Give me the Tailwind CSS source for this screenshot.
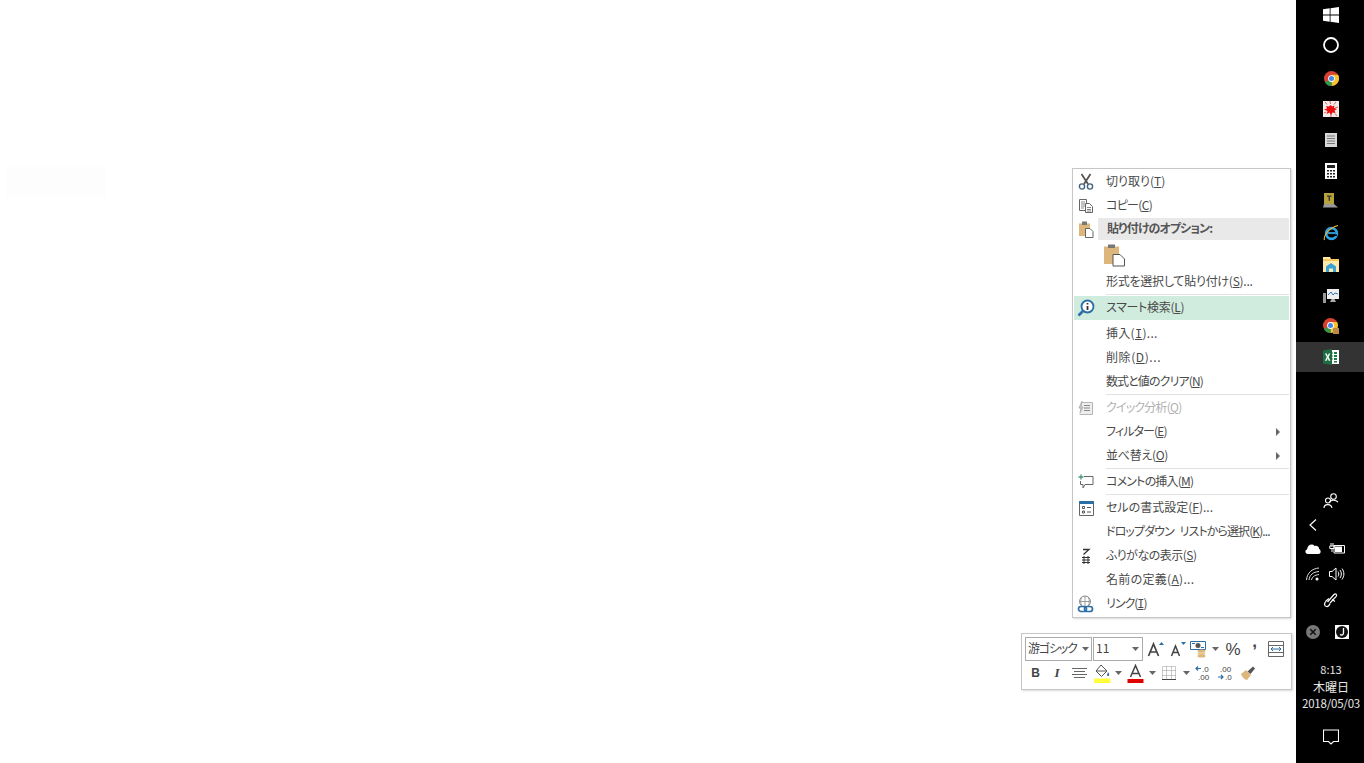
<!DOCTYPE html>
<html lang="ja">
<head>
  <meta charset="UTF-8" />
  <title>Excel context menu</title>
  <script src="https://cdn.jsdelivr.net/npm/@tailwindcss/browser@4"></script>
</head>
<body class="bg-white">
  <div class="flex w-[1364px] h-[763px] overflow-hidden font-['Noto_Sans_CJK_JP',sans-serif]">

    <!-- Sheet area -->
    <main class="relative flex-1 bg-white">
      <div class="ml-[6px] pt-[167px]"><div class="w-[100px] h-[30px] bg-[#fdfdfd]"></div></div>

      <!-- Context menu -->
      <div class="absolute left-[1072px] top-[168px] w-[219px] h-[450px] bg-white border border-[#c6c6c6] p-px shadow-[1px_1px_2px_rgba(0,0,0,0.15)] text-[12px] text-[#4a4a4a] [font-feature-settings:'palt']">
        <div class="flex items-center h-6">
          <span class="w-6 mr-2 flex justify-center">
            <svg width="16" height="18" viewBox="0 0 16 18" fill="none"><path d="M3.500 1l6.500 10M12.500 1L6 11" stroke="#555" stroke-width="1.800"/><circle cx="4" cy="13.500" r="2.600" stroke="#44627f" stroke-width="1.400"/><circle cx="12" cy="13.500" r="2.600" stroke="#44627f" stroke-width="1.400"/></svg>
          </span>
          <span class="-mt-0.5">切り取り(<u>T</u>)</span>
        </div>
        <div class="flex items-center h-6">
          <span class="w-6 mr-2 flex justify-center">
            <svg width="16" height="16" viewBox="0 0 16 16" fill="none" stroke="#666"><path d="M1.500 1.500h7v11h-7z" fill="#fff"/><path d="M3 4h4M3 6h4M3 8h4M3 10h3" stroke="#888"/><path d="M7.500 5.500h4l3 3v6h-7z" fill="#fff"/><path d="M9 9.500h4M9 11.500h4M9 13h4" stroke="#888"/></svg>
          </span>
          <span class="-mt-0.5 tracking-[-0.7px]">コピー(<u>C</u>)</span>
        </div>
        <div class="flex items-center h-[22px]">
          <span class="w-6 flex justify-center">
            <svg width="17" height="18" viewBox="0 0 17 18"><path d="M1 3.500h11V16H1z" fill="#dcb67a"/><path d="M4 1.500h5V5H4z" fill="#777"/><path d="M7.500 8.500h4.500l3 3v6H7.500z" fill="#fff" stroke="#666"/></svg>
          </span>
          <span class="flex-1 h-full flex items-center pl-[9px] bg-[#e9e9e9] font-bold text-[#555] tracking-[-0.9px]"><span class="-mt-0.5">貼り付けのオプション:</span></span>
        </div>
        <div class="flex items-center h-[30px] pl-[30px]">
          <svg width="22" height="24" viewBox="0 0 22 24"><path d="M0 3.500h15V21H0z" fill="#dcb67a"/><path d="M4 1.500h7v3.500H4z" fill="#777"/><path d="M9 11.500h7l4.500 4.500v7H9z" fill="#fff" stroke="#555"/></svg>
        </div>
        <div class="flex items-center h-6 pl-8"><span class="-mt-0.5 tracking-[-0.25px]">形式を選択して貼り付け(<u>S</u>)...</span></div>
        <div class="ml-8 h-px bg-[#e1e1e1] mb-px"></div>

        <div class="flex items-center h-6 bg-[#d0ecdf]">
          <span class="w-6 mr-2 flex justify-center">
            <svg width="18" height="18" viewBox="0 0 18 18" fill="none"><circle cx="10.500" cy="7.500" r="6" fill="#fff" stroke="#2c6ea6" stroke-width="1.800"/><path d="M6 12l-4.500 4.500" stroke="#2c6ea6" stroke-width="2.600"/><path d="M10.500 4v1.500M10.500 7v4" stroke="#333" stroke-width="1.800"/></svg>
          </span>
          <span class="-mt-0.5 tracking-[-0.3px]">スマート検索(<u>L</u>)</span>
        </div>
        <div class="h-0.5"></div>

        <div class="flex items-center h-6 pl-8"><span class="-mt-0.5 tracking-[0.3px]">挿入(<u class="leading-none font-['Liberation_Mono',monospace]">I</u>)...</span></div>
        <div class="flex items-center h-6 pl-8"><span class="-mt-0.5 tracking-[0.6px]">削除(<u>D</u>)...</span></div>
        <div class="flex items-center h-6 pl-8"><span class="-mt-0.5 tracking-[-0.9px]">数式と値のクリア(<u>N</u>)</span></div>
        <div class="ml-8 h-px bg-[#e1e1e1] mb-px"></div>

        <div class="flex items-center h-6 text-[#b1b1b1]">
          <span class="w-6 mr-2 flex justify-center">
            <svg width="16" height="16" viewBox="0 0 16 16" fill="none" stroke="#b5b5b5"><path d="M3.500 2.500h11v12h-13" fill="#eee"/><path d="M6 5.500h6M6 8h6M6 10.500h6" stroke="#888"/><path d="M4 1L1 8h2l-1 5 3-6H3z" fill="#ccc"/></svg>
          </span>
          <span class="-mt-0.5 tracking-[-0.8px]">クイック分析(<u>Q</u>)</span>
        </div>
        <div class="flex items-center h-6 pl-8 pr-[9px] justify-between">
          <span class="-mt-0.5 tracking-[-0.9px]">フィルター(<u>E</u>)</span>
          <svg width="4" height="8" viewBox="0 0 4 8"><path d="M0 0l4 4-4 4z" fill="#666"/></svg>
        </div>
        <div class="flex items-center h-6 pl-8 pr-[9px] justify-between">
          <span class="-mt-0.5 tracking-[-0.3px]">並べ替え(<u>O</u>)</span>
          <svg width="4" height="8" viewBox="0 0 4 8"><path d="M0 0l4 4-4 4z" fill="#666"/></svg>
        </div>
        <div class="ml-8 h-px bg-[#e1e1e1] mb-px"></div>

        <div class="flex items-center h-6">
          <span class="w-6 mr-2 flex justify-center">
            <svg width="16" height="16" viewBox="0 0 16 16" fill="none"><path d="M6 2.500h9v8H7l-2 3.500v-3.500H2.500V7" stroke="#666"/><path d="M3 0.500v5M0.500 3h5" stroke="#4a9a7d" stroke-width="1.400"/></svg>
          </span>
          <span class="-mt-0.5 tracking-[-0.8px]">コメントの挿入(<u>M</u>)</span>
        </div>
        <div class="ml-8 h-px bg-[#e1e1e1] mb-px"></div>

        <div class="flex items-center h-6">
          <span class="w-6 mr-2 flex justify-center">
            <svg width="15" height="15" viewBox="0 0 15 15" fill="none"><path d="M.5.500h14v14H.5z" fill="#fff" stroke="#666"/><path d="M.5.500h14v2H.5z" fill="#2c6ea6" stroke="#2c6ea6"/><path d="M3.500 5.500h2v2h-2zM3.500 10h2v2h-2z" stroke="#555"/><path d="M8 6.500h4M8 11h4" stroke="#555"/></svg>
          </span>
          <span class="-mt-0.5">セルの書式設定(<u>F</u>)...</span>
        </div>
        <div class="flex items-center h-6 pl-8"><span class="-mt-0.5 tracking-[-0.9px] [word-spacing:4px]">ドロップダウン リストから選択(<u>K</u>)...</span></div>
        <div class="flex items-center h-6">
          <span class="w-6 mr-2 flex justify-center">
            <svg width="12" height="16" viewBox="0 0 12 16" fill="none" stroke="#333"><path d="M3 1.500h6L3.500 6.500" stroke-width="1.300"/><path d="M2 9.500h8M2 12h8M2 14.500h8M4 8v8M8 8v8"/></svg>
          </span>
          <span class="-mt-0.5 tracking-[-0.5px]">ふりがなの表示(<u>S</u>)</span>
        </div>
        <div class="flex items-center h-6 pl-8"><span class="-mt-0.5 tracking-[0.3px]">名前の定義(<u>A</u>)...</span></div>
        <div class="flex items-center h-6">
          <span class="w-6 mr-2 flex justify-center">
            <svg width="18" height="18" viewBox="0 0 18 18" fill="none"><circle cx="8" cy="6.500" r="5.500" stroke="#888"/><path d="M2.500 6.500h11M8 1v11M4.500 2.500c-1 3-1 5 0 8M11.500 2.500c1 3 1 5 0 8" stroke="#888" stroke-width="0.800"/><rect x="1.500" y="11.500" width="8" height="5" rx="2.500" stroke="#2c6ea6" stroke-width="1.700"/><rect x="7.500" y="11.500" width="8" height="5" rx="2.500" stroke="#2c6ea6" stroke-width="1.700"/></svg>
          </span>
          <span class="-mt-0.5 tracking-[-1px]">リンク(<u class="leading-none font-['Liberation_Mono',monospace]">I</u>)</span>
        </div>
      </div>

      <!-- Mini toolbar -->
      <div class="absolute left-[1021px] top-[633px] w-[271px] h-[57px] bg-white border border-[#c6c6c6] pl-[3px] pt-[3px] shadow-[1px_1px_2px_rgba(0,0,0,0.15)] text-[#444]">
        <div class="flex items-center h-6">
          <div class="w-[67px] h-6 border border-[#ababab] flex items-center justify-between pl-0.5 pr-0.5 text-[12px] whitespace-nowrap tracking-[-1.2px] [font-feature-settings:'palt']">
            <span class="-mt-0.5">游ゴシック</span>
            <svg width="7" height="4" viewBox="0 0 7 4"><path d="M0 0h7L3.500 4z" fill="#666"/></svg>
          </div>
          <div class="ml-px w-[50px] h-6 border border-[#ababab] flex items-center justify-between pl-0.5 pr-[3px] text-[12px]">
            <span class="-mt-0.5">11</span>
            <svg width="7" height="4" viewBox="0 0 7 4"><path d="M0 0h7L3.500 4z" fill="#666"/></svg>
          </div>
          <span class="ml-0.5 w-[22px] flex justify-center">
            <svg width="18" height="18" viewBox="0 0 18 18" fill="none"><path d="M1.500 16L6.500 4l5 12M3.500 12h6" stroke="#444" stroke-width="1.700"/><path d="M12 5l2.500-3L17 5z" fill="#2c6ea6"/></svg>
          </span>
          <span class="w-[22px] flex justify-center">
            <svg width="18" height="18" viewBox="0 0 18 18" fill="none"><path d="M2.500 16L6.500 6l4 10M4 12.500h5" stroke="#444" stroke-width="1.500"/><path d="M12 2h5l-2.500 3z" fill="#2c6ea6"/></svg>
          </span>
          <span class="w-5 flex justify-center">
            <svg width="18" height="18" viewBox="0 0 18 18" fill="none"><path d="M0.500 1.500h15v8h-15z" fill="#fff" stroke="#2c6ea6"/><circle cx="8" cy="5.500" r="2.500" fill="#555"/><path d="M2 3.500h3M11 7.500h3" stroke="#2c6ea6"/><ellipse cx="11.500" cy="11" rx="4" ry="1.500" fill="#dcb67a"/><ellipse cx="11.500" cy="13.500" rx="4" ry="1.500" fill="#e8c78e"/><ellipse cx="11.500" cy="16" rx="4" ry="1.500" fill="#dcb67a"/></svg>
          </span>
          <span class="w-3 flex justify-center"><svg width="7" height="4" viewBox="0 0 7 4"><path d="M0 0h7L3.500 4z" fill="#666"/></svg></span>
          <span class="ml-px w-[22px] text-center text-[17px] leading-none font-['Liberation_Sans',sans-serif]">%</span>
          <span class="w-[21px] text-center text-[17px] leading-none font-bold font-['Liberation_Sans',sans-serif] -mt-4">,</span>
          <span class="w-[22px] flex justify-center">
            <svg width="16" height="16" viewBox="0 0 16 16" fill="none"><path d="M0.500 0.500h15v15H.5z" stroke="#666"/><path d="M0.500 4.500h15M0.500 11.500h15" stroke="#666"/><path d="M3 8h10M5 6L3 8l2 2M11 6l2 2-2 2" stroke="#2c6ea6"/></svg>
          </span>
        </div>
        <div class="flex items-center h-6 text-[12px]">
          <span class="w-[21px] text-center font-bold font-['Liberation_Sans',sans-serif]">B</span>
          <span class="w-[22px] text-center italic font-bold font-['Liberation_Serif',serif] text-[13px]">I</span>
          <span class="w-[23px] flex justify-center">
            <svg width="15" height="11" viewBox="0 0 15 11" fill="none" stroke="#666"><path d="M0 0.500h15M2 3.500h11M0 6.500h15M2 9.500h11"/></svg>
          </span>
          <span class="w-[22px] flex justify-center">
            <svg width="17" height="19" viewBox="0 0 17 19" fill="none"><path d="M7 1l6 6-5.500 5.500L2 7z" stroke="#555"/><path d="M2 7h10" stroke="#555"/><path d="M14 8c1 1.500 1.500 2.500 1 3.500s-2 .5-2-.5z" fill="#2c6ea6"/><path d="M0 14.500h16.500V19H0z" fill="#ffff3c"/></svg>
          </span>
          <span class="w-[11px] flex justify-center"><svg width="7" height="4" viewBox="0 0 7 4"><path d="M0 0h7L3.500 4z" fill="#666"/></svg></span>
          <span class="w-[22px] flex justify-center">
            <svg width="17" height="19" viewBox="0 0 17 19" fill="none"><path d="M3.500 13L8.500 1.500l5 11.500M5 9.500h7" stroke="#444" stroke-width="1.500"/><path d="M0.500 15h16v4H.5z" fill="#e00000"/></svg>
          </span>
          <span class="w-3 flex justify-center"><svg width="7" height="4" viewBox="0 0 7 4"><path d="M0 0h7L3.500 4z" fill="#666"/></svg></span>
          <span class="w-[22px] flex justify-center">
            <svg width="14" height="14" viewBox="0 0 14 14" fill="none" stroke="#999" stroke-dasharray="1 1"><path d="M.5.500h13v13H.5zM4.500 .5v13M9.500 .5v13M.5 4.500h13M.5 9.500h13"/><path d="M0 13.500h14" stroke="#444" stroke-dasharray="none"/></svg>
          </span>
          <span class="w-3 flex justify-center"><svg width="7" height="4" viewBox="0 0 7 4"><path d="M0 0h7L3.500 4z" fill="#666"/></svg></span>
          <span class="w-[22px] flex justify-center">
            <svg width="16" height="16" viewBox="0 0 16 16" fill="none"><path d="M6 3.500H1M3 1.500l-2 2 2 2" stroke="#2c6ea6" stroke-width="1.200"/><text x="7" y="7" font-size="8" fill="#444" font-family="Liberation Sans">.0</text><text x="3" y="15" font-size="8" fill="#444" font-family="Liberation Sans">.00</text></svg>
          </span>
          <span class="w-[22px] flex justify-center">
            <svg width="16" height="16" viewBox="0 0 16 16" fill="none"><text x="3" y="7" font-size="8" fill="#444" font-family="Liberation Sans">.00</text><path d="M1 12h5M4 10l2 2-2 2" stroke="#2c6ea6" stroke-width="1.200"/><text x="8" y="15" font-size="8" fill="#444" font-family="Liberation Sans">.0</text></svg>
          </span>
          <span class="ml-px w-[22px] flex justify-center">
            <svg width="17" height="16" viewBox="0 0 17 16" fill="none"><path d="M1 9l5-4 5 5-4 5c-2 0-5-3-6-6z" fill="#dcb67a"/><path d="M7.500 6.500L13 1.500l2 2-4.500 5.500" fill="#555"/></svg>
          </span>
        </div>
      </div>
    </main>

    <!-- Vertical taskbar -->
    <aside class="w-[68px] h-full bg-black flex flex-col text-[#e6e6e6] text-[12px]">
      <div class="h-[30px] pl-0.5 flex items-center justify-center">
        <svg width="16" height="16" viewBox="0 0 16 16"><path d="M0 2.300l6.700-1v6.300H0zM7.500 1.200L16 0v7.600H7.500zM0 8.400h6.700v6.300l-6.700-1zM7.500 8.400H16V16l-8.500-1.200z" fill="#fff"/></svg>
      </div>
      <div class="h-[30px] pl-0.5 flex items-center justify-center">
        <svg width="16" height="16" viewBox="0 0 16 16" fill="none"><circle cx="8" cy="8" r="7" stroke="#fff" stroke-width="1.800"/></svg>
      </div>
      <div class="h-[30px] pl-0.5 mt-[3px] flex items-center justify-center">
        <svg width="15" height="15" viewBox="0 0 16 16"><circle cx="8" cy="8" r="8" fill="#d8412f"/><path d="M8 8L1 12a8 8 0 0 0 7.500 4z" fill="#2f9a4a"/><path d="M8 8l.5 8A8 8 0 0 0 15 4H8z" fill="#f6c331"/><circle cx="8" cy="8" r="3.600" fill="#fff"/><circle cx="8" cy="8" r="2.700" fill="#4a86e8"/></svg>
      </div>
      <div class="h-[30px] pl-0.5 mt-px flex items-center justify-center">
        <svg width="16" height="16" viewBox="0 0 16 16"><path d="M0 0h16v16H0z" fill="#f4eaea"/><path d="M8 4l1 1.500 2.500-1-.5 2.500 3 1-2.500 1.500 1 2.500-3-.5L8 14l-1.500-2.500-3 1.500 1-3L1 8.500 4 7.500 3 5l2.500.5z" fill="#ee0d0d"/><path d="M2 1l2 2.500M7 0l.5 3M13 1l-2 2.500M15 6l-3 1M1 12l2-1M14 15l-2-2.500M8 16v-3" stroke="#c44" stroke-width="0.800"/></svg>
      </div>
      <div class="h-[30px] pl-0.5 mt-px flex items-center justify-center">
        <svg width="12" height="14" viewBox="0 0 12 14"><path d="M0 0h12v14H0z" fill="#d8d8d8"/><path d="M2 3h8M2 5.500h8M2 8h8M2 10.500h8" stroke="#777"/></svg>
      </div>
      <div class="h-[30px] pl-0.5 mt-px flex items-center justify-center">
        <svg width="12" height="16" viewBox="0 0 12 16"><path d="M0 0h12v16H0z" fill="#fff"/><path d="M2 2h8v3H2z" fill="#222"/><path d="M2 7h2v1.500H2zM5 7h2v1.500H5zM8 7h2v1.500H8zM2 10h2v1.500H2zM5 10h2v1.500H5zM8 10h2v1.500H8zM2 13h2v1.500H2zM5 13h2v1.500H5zM8 13h2v1.500H8z" fill="#222"/></svg>
      </div>
      <div class="h-[30px] pl-0.5 flex items-center justify-center">
        <svg width="16" height="16" viewBox="0 0 16 16"><path d="M1 0h10v11H1z" fill="#b5a238"/><path d="M4 2.500h4.500v1.200H7v4H5.600v-4H4z" fill="#333"/><path d="M1 11h10l4 3.500H0z" fill="#999"/></svg>
      </div>
      <div class="h-[30px] pl-0.5 mt-0.5 flex items-center justify-center">
        <svg width="16" height="16" viewBox="0 0 16 16" fill="none"><circle cx="8.500" cy="8.500" r="5.300" stroke="#2ea4e4" stroke-width="2.800"/><path d="M4.500 8h8" stroke="#2ea4e4" stroke-width="1.800"/><path d="M9 9.500h5v1.500H9z" fill="#000"/><path d="M1.500 15C0 11 6 3 15 .5" stroke="#e8b93a" stroke-width="1.100"/></svg>
      </div>
      <div class="h-[30px] pl-0.5 mt-px flex items-center justify-center">
        <svg width="16" height="15" viewBox="0 0 16 15"><path d="M0 0h7l1 2h8v13H0z" fill="#ffe9a8"/><path d="M0 2h16v2H0z" fill="#f5c95c"/><path d="M3 15V9.500L8 6l5 3.500V15h-3v-3.500H6V15z" fill="#3aa0d8"/></svg>
      </div>
      <div class="h-[30px] pl-0.5 mt-0.5 flex items-center justify-center">
        <svg width="16" height="16" viewBox="0 0 16 16" fill="none"><path d="M0 5h3v10H0z" fill="#999"/><path d="M4 1h12v10H4z" fill="#eee"/><path d="M5 7l3-3 2 3 2-2 3 1" stroke="#3574b8"/><path d="M7 14h6l-1.500-3h-3z" fill="#aaa"/></svg>
      </div>
      <div class="h-[30px] pl-0.5 flex items-center justify-center">
        <svg width="16" height="16" viewBox="0 0 16 16"><circle cx="7.500" cy="7.500" r="7.500" fill="#d8412f"/><path d="M7.500 7.500L1 11a7.500 7.500 0 0 0 7 4z" fill="#2f9a4a"/><path d="M7.500 7.500l.5 7.500A7.500 7.500 0 0 0 14 4H7.500z" fill="#f6c331"/><circle cx="7.500" cy="7.500" r="3.400" fill="#fff"/><circle cx="7.500" cy="7.500" r="2.500" fill="#4a86e8"/><path d="M10 10h6v6h-6z" fill="#b98a4a"/></svg>
      </div>
      <div class="h-[30px] pl-0.5 mt-px flex items-center justify-center bg-[#333]">
        <svg width="16" height="16" viewBox="0 0 16 16"><path d="M6 1h10v14H6z" fill="#fff"/><path d="M11 3h3v2h-3zM11 6h3v2h-3zM11 9h3v2h-3zM11 12h3v1.500h-3zM7.500 3h2v2h-2zM7.500 6h2v2h-2zM7.500 9h2v2h-2z" fill="#1f7a47"/><path d="M0 1.500L9 0v16L0 14.500z" fill="#1f6e43"/><path d="M2 4.500h1.800L4.700 7l1-2.500h1.600L5.600 8l1.800 3.700H5.700l-1-2.500-1 2.500H2L3.800 8z" fill="#fff"/></svg>
      </div>

      <!-- Notification area -->
      <div class="h-6 pl-0.5 mt-[117px] flex items-center justify-center">
        <svg width="16" height="16" viewBox="0 0 16 16" fill="none" stroke="#fff" stroke-width="1.100"><circle cx="10.500" cy="3.500" r="2.800"/><path d="M6.500 9c1-2 6-2.500 8.500 0"/><circle cx="5" cy="7.500" r="2.500"/><path d="M1 15c0-4 7-5 8 0"/></svg>
      </div>
      <div class="h-[23px] pl-[5px] flex items-center">
        <span class="w-6 flex justify-center">
          <svg width="8" height="12" viewBox="0 0 8 12" fill="none"><path d="M7 .5L1 6l6 5.500" stroke="#fff" stroke-width="1.200"/></svg>
        </span>
      </div>
      <div class="h-[25px] pl-[5px] flex items-center">
        <span class="w-6 flex justify-center">
          <svg width="16" height="11" viewBox="0 0 16 11"><path d="M3 11C0 11-.5 7 2 6.500 2.500 2 7 0 9.500 3c3-1 5 1.500 4.500 3 2 .5 2.500 5-.5 5z" fill="#fff"/></svg>
        </span>
        <span class="w-6 flex justify-center">
          <svg width="16" height="11" viewBox="0 0 16 11" fill="none"><path d="M2 0v3M4 0v3M.8 3h4.400v2.500H.8zM3 5.500V9" stroke="#fff"/><path d="M5 2.500h10.500v7.500H5z" stroke="#fff"/><path d="M6 3.500h7v5.500H6z" fill="#fff"/></svg>
        </span>
      </div>
      <div class="h-[26px] pl-[5px] flex items-center">
        <span class="w-6 flex justify-center">
          <svg width="14" height="14" viewBox="0 0 14 14" fill="none" stroke="#ddd"><path d="M.5 13C1 6 6 1.500 13 1M3 13c.5-5 4-8 10-8.500M5.500 13c.5-3 3-5 7.500-5.500"/><circle cx="11" cy="12" r="1.500" fill="#fff" stroke="none"/></svg>
        </span>
        <span class="w-6 flex justify-center">
          <svg width="16" height="14" viewBox="0 0 16 14" fill="none" stroke="#fff"><path d="M.5 4.500h2.500L7 1v12L3 9.500H.5z"/><path d="M9 4.500c1 1.500 1 3.500 0 5M11 3c1.800 2.500 1.800 5.500 0 8M13 1.500c2.500 3.500 2.500 7.500 0 11"/></svg>
        </span>
      </div>
      <div class="h-[26px] pl-0.5 flex items-center justify-center">
        <svg width="16" height="16" viewBox="0 0 16 16" fill="none" stroke="#fff" stroke-width="1.200"><path d="M4.500 10L11 2.500c1.500-1.500 3.500 0 2.200 1.800L7 11"/><path d="M6 6.500L3 9c-2 2.500-2 5 .5 5.500 1.500.2 3-1.500 3.500-3"/><path d="M9 7.500l3 2"/></svg>
      </div>
      <div class="h-[26px] mt-1.5 pl-[5px] flex items-center">
        <span class="w-6 flex justify-center">
          <svg width="14" height="14" viewBox="0 0 14 14" fill="none"><circle cx="7" cy="7" r="7" fill="#777"/><path d="M4.300 4.300l5.400 5.400M9.700 4.300l-5.400 5.400" stroke="#111" stroke-width="1.600"/></svg>
        </span>
        <span class="ml-[5px] w-6 flex justify-center">
          <svg width="14" height="14" viewBox="0 0 14 14" fill="none"><path d="M0 0h14v14H0z" fill="#fff"/><circle cx="7" cy="7" r="6" fill="#111"/><path d="M8.500 3v5c0 2-2 2.500-3.500 1.500" stroke="#fff" stroke-width="1.300"/></svg>
        </span>
      </div>

      <div class="mt-4 pl-0.5 flex flex-col items-center whitespace-nowrap">
        <span class="h-[17px] leading-[17px] text-[11px]">8:13</span>
        <span class="h-[17px] leading-[17px]">木曜日</span>
        <span class="h-[17px] leading-[17px] text-[11.5px] tracking-[-0.2px]">2018/05/03</span>
      </div>
      <div class="h-6 pl-0.5 mt-[13px] flex items-center justify-center">
        <svg width="16" height="16" viewBox="0 0 16 16" fill="none" stroke="#fff" stroke-width="1.100"><path d="M.5 1h15v11.500h-5L8 15l-2.500-2.500h-5z"/></svg>
      </div>
    </aside>
  </div>
</body>
</html>
